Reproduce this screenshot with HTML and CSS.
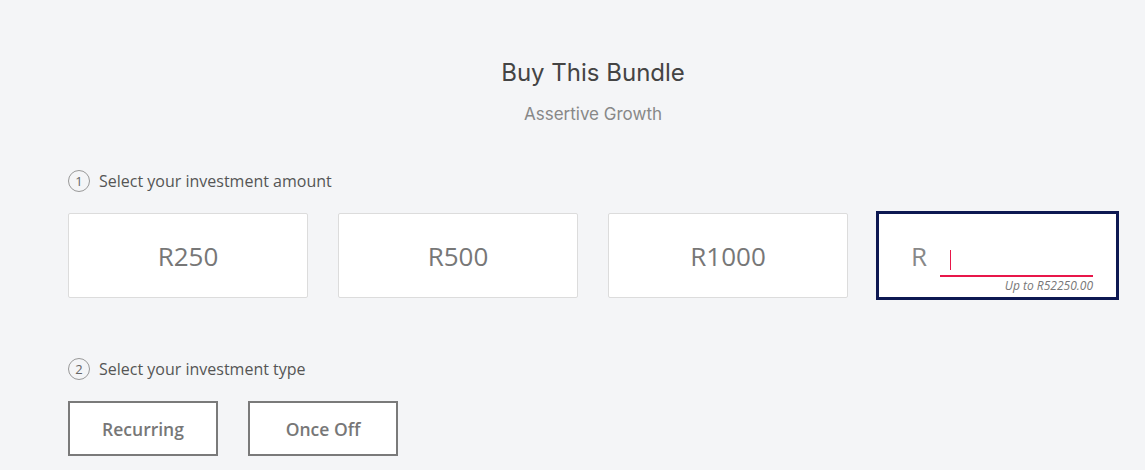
FILE: index.html
```html
<!DOCTYPE html>
<html>
<head>
<meta charset="utf-8">
<link rel="stylesheet" href="styles.css">
</head>
<body>
<div class="page">
  <header class="head">
    <h1 class="title">Buy This Bundle</h1>
    <p class="subtitle">Assertive Growth</p>
  </header>

  <section class="step step-amount">
    <div class="step-label"><span class="num">1</span><span>Select your investment amount</span></div>
    <div class="amounts">
      <div class="amount">R250</div>
      <div class="amount">R500</div>
      <div class="amount">R1000</div>
      <div class="amount custom">
        <div class="custom-row">
          <span class="cur">R</span>
          <div class="field">
            <div class="input"><span class="caret"></span></div>
            <div class="hint">Up to R52250.00</div>
          </div>
        </div>
      </div>
    </div>
  </section>

  <section class="step step-type">
    <div class="step-label"><span class="num">2</span><span>Select your investment type</span></div>
    <div class="types">
      <div class="type">Recurring</div>
      <div class="type">Once Off</div>
    </div>
  </section>
</div>
</body>
</html>
```

FILE: styles.css
```css
html, body {
  margin: 0;
  padding: 0;
  background: #f4f5f7;
}
body {
  font-family: "Open Sans", "Liberation Sans", sans-serif;
  color: #555;
}
.page {
  width: 1050px;
  margin-left: 68px;
  padding-top: 58px;
}
.head {
  text-align: center;
}
.title {
  margin: 0;
  font-family: "Inter", "Liberation Sans", sans-serif;
  font-weight: 400;
  font-size: 24px;
  line-height: 30px;
  color: #444;
}
.subtitle {
  margin: 16px 0 0;
  font-family: "Inter", "Liberation Sans", sans-serif;
  font-size: 17px;
  line-height: 20px;
  color: #888;
}
.step-amount {
  margin-top: 46px;
}
.step-label {
  display: flex;
  align-items: center;
  gap: 9px;
  font-size: 16px;
  line-height: 22px;
  color: #555;
}
.num {
  box-sizing: border-box;
  width: 22px;
  height: 22px;
  border: 1px solid #999;
  border-radius: 50%;
  display: flex;
  align-items: center;
  justify-content: center;
  font-size: 13px;
  color: #666;
}
.amounts {
  display: flex;
  gap: 30px;
  margin-top: 21px;
}
.amount {
  flex-shrink: 0;
  box-sizing: border-box;
  width: 240px;
  height: 85px;
  background: #fff;
  border: 1px solid #dcdcdc;
  border-radius: 2px;
  display: flex;
  align-items: center;
  justify-content: center;
  font-size: 26px;
  color: #777;
}
.amount.custom {
  width: 243px;
  height: 89px;
  margin-top: -2px;
  margin-left: -2px;
  border: 3px solid #0d1852;
  border-radius: 0;
  align-items: flex-start;
  justify-content: flex-start;
  padding-left: 32px;
}
.custom-row {
  display: flex;
  align-items: flex-start;
  padding-top: 27px;
}
.cur {
  font-size: 26px;
  line-height: 30px;
  color: #888;
  width: 29px;
}
.field {
  width: 153px;
}
.input {
  box-sizing: border-box;
  height: 36px;
  border-bottom: 2px solid #e8174a;
  padding-left: 10px;
  padding-top: 9px;
}
.caret {
  display: block;
  width: 1px;
  height: 20px;
  background: #e8174a;
}
.hint {
  text-align: right;
  font-size: 12px;
  font-style: italic;
  color: #777;
  line-height: 14px;
  margin-top: 2px;
}
.step-type {
  margin-top: 58px;
}
.types {
  display: flex;
  gap: 30px;
  margin-top: 21px;
}
.type {
  box-sizing: border-box;
  width: 150px;
  height: 55px;
  border: 2px solid #7a7a7a;
  background: #fff;
  display: flex;
  align-items: center;
  justify-content: center;
  font-size: 17.5px;
  font-weight: 600;
  color: #777;
}
```
